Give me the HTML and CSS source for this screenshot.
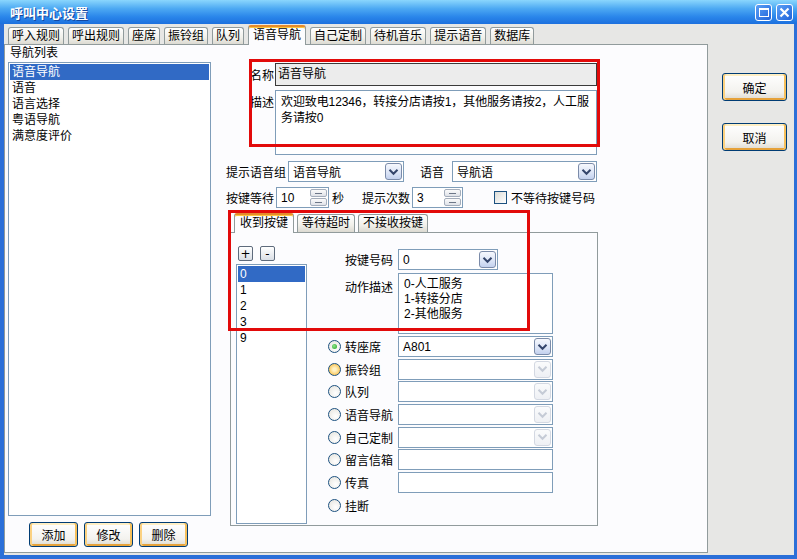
FILE: index.html
```html
<!DOCTYPE html>
<html lang="zh-CN">
<head>
    <meta charset="UTF-8">
    <title>呼叫中心设置</title>
    <link rel="stylesheet" href="styles.css">
</head>
<body>
<div class="window">
    <div class="titlebar">
        <span class="title">呼叫中心设置</span>
        <div class="title-btns">
            <span class="tbtn"><span class="max-box"></span></span>
            <span class="tbtn">
                <svg width="11" height="11" viewBox="0 0 11 11"><path d="M1.5 1.5 L9.5 9.5 M9.5 1.5 L1.5 9.5" stroke="#fff" stroke-width="2.2"/></svg>
            </span>
        </div>
    </div>

    <div class="client">
        <div class="main">
            <div class="tabs">
                <span class="tab">呼入规则</span>
                <span class="tab">呼出规则</span>
                <span class="tab">座席</span>
                <span class="tab">振铃组</span>
                <span class="tab">队列</span>
                <span class="tab active">语音导航</span>
                <span class="tab">自己定制</span>
                <span class="tab">待机音乐</span>
                <span class="tab">提示语音</span>
                <span class="tab">数据库</span>
            </div>

            <div class="panel">
                <div class="nav-col">
                    <div class="nav-label">导航列表</div>
                    <ul class="listbox nav-list">
                        <li class="selected">语音导航</li>
                        <li>语音</li>
                        <li>语言选择</li>
                        <li>粤语导航</li>
                        <li>满意度评价</li>
                    </ul>
                    <div class="nav-btns">
                        <button class="xp-btn">添加</button>
                        <button class="xp-btn">修改</button>
                        <button class="xp-btn">删除</button>
                    </div>
                </div>

                <div class="form-col">
                    <div class="name-row">
                        <span class="lbl-short">名称</span>
                        <div class="name-input">语音导航</div>
                    </div>
                    <div class="desc-row">
                        <span class="lbl-short">描述</span>
                        <div class="desc-box">欢迎致电12346，转接分店请按1，其他服务请按2，人工服<br>务请按0</div>
                    </div>

                    <div class="row row-voice">
                        <span class="lbl lbl-group">提示语音组</span>
                        <div class="combo combo-group">
                            <span class="combo-val">语音导航</span>
                            <span class="arrow"><svg width="11" height="8" viewBox="0 0 11 8"><path d="M1.5 1.8 L5.5 5.8 L9.5 1.8" fill="none" stroke="#34456b" stroke-width="2"/></svg></span>
                        </div>
                        <span class="lbl lbl-voice">语音</span>
                        <div class="combo combo-voice">
                            <span class="combo-val">导航语</span>
                            <span class="arrow"><svg width="11" height="8" viewBox="0 0 11 8"><path d="M1.5 1.8 L5.5 5.8 L9.5 1.8" fill="none" stroke="#34456b" stroke-width="2"/></svg></span>
                        </div>
                    </div>

                    <div class="row row-wait">
                        <span class="lbl lbl-wait">按键等待</span>
                        <div class="spin spin-wait">
                            <span class="spin-val">10</span>
                            <span class="spin-btns"><span class="spin-up"></span><span class="spin-down"></span></span>
                        </div>
                        <span class="lbl lbl-sec">秒</span>
                        <span class="lbl lbl-times">提示次数</span>
                        <div class="spin spin-times">
                            <span class="spin-val">3</span>
                            <span class="spin-btns"><span class="spin-up"></span><span class="spin-down"></span></span>
                        </div>
                        <span class="checkbox"></span>
                        <span class="lbl lbl-check">不等待按键号码</span>
                    </div>

                    <div class="subtabs">
                        <span class="subtab active">收到按键</span>
                        <span class="subtab">等待超时</span>
                        <span class="subtab">不接收按键</span>
                    </div>
                    <div class="subpanel">
                        <div class="key-col">
                            <div class="pm-row">
                                <button class="pm-btn">+</button>
                                <button class="pm-btn">-</button>
                            </div>
                            <ul class="listbox key-list">
                                <li class="selected">0</li>
                                <li>1</li>
                                <li>2</li>
                                <li>3</li>
                                <li>9</li>
                            </ul>
                        </div>

                        <div class="action-col">
                            <div class="key-row">
                                <span class="lbl lbl-key">按键号码</span>
                                <div class="combo combo-key">
                                    <span class="combo-val">0</span>
                                    <span class="arrow"><svg width="11" height="8" viewBox="0 0 11 8"><path d="M1.5 1.8 L5.5 5.8 L9.5 1.8" fill="none" stroke="#34456b" stroke-width="2"/></svg></span>
                                </div>
                            </div>
                            <div class="action-row">
                                <span class="lbl lbl-key">动作描述</span>
                                <div class="action-box">0-人工服务<br>1-转接分店<br>2-其他服务</div>
                            </div>

                            <div class="radio-list">
                                <div class="radio-row">
                                    <span class="radio-item"><span class="radio checked"></span>转座席</span>
                                    <div class="combo combo-target">
                                        <span class="combo-val">A801</span>
                                        <span class="arrow"><svg width="11" height="8" viewBox="0 0 11 8"><path d="M1.5 1.8 L5.5 5.8 L9.5 1.8" fill="none" stroke="#34456b" stroke-width="2"/></svg></span>
                                    </div>
                                </div>
                                <div class="radio-row">
                                    <span class="radio-item"><span class="radio hover"></span>振铃组</span>
                                    <div class="combo combo-target disabled">
                                        <span class="combo-val"></span>
                                        <span class="arrow"><svg width="11" height="8" viewBox="0 0 11 8"><path d="M1.5 1.8 L5.5 5.8 L9.5 1.8" fill="none" stroke="#c5cbd6" stroke-width="2"/></svg></span>
                                    </div>
                                </div>
                                <div class="radio-row">
                                    <span class="radio-item"><span class="radio"></span>队列</span>
                                    <div class="combo combo-target disabled">
                                        <span class="combo-val"></span>
                                        <span class="arrow"><svg width="11" height="8" viewBox="0 0 11 8"><path d="M1.5 1.8 L5.5 5.8 L9.5 1.8" fill="none" stroke="#c5cbd6" stroke-width="2"/></svg></span>
                                    </div>
                                </div>
                                <div class="radio-row">
                                    <span class="radio-item"><span class="radio"></span>语音导航</span>
                                    <div class="combo combo-target disabled">
                                        <span class="combo-val"></span>
                                        <span class="arrow"><svg width="11" height="8" viewBox="0 0 11 8"><path d="M1.5 1.8 L5.5 5.8 L9.5 1.8" fill="none" stroke="#c5cbd6" stroke-width="2"/></svg></span>
                                    </div>
                                </div>
                                <div class="radio-row">
                                    <span class="radio-item"><span class="radio"></span>自己定制</span>
                                    <div class="combo combo-target disabled">
                                        <span class="combo-val"></span>
                                        <span class="arrow"><svg width="11" height="8" viewBox="0 0 11 8"><path d="M1.5 1.8 L5.5 5.8 L9.5 1.8" fill="none" stroke="#c5cbd6" stroke-width="2"/></svg></span>
                                    </div>
                                </div>
                                <div class="radio-row">
                                    <span class="radio-item"><span class="radio"></span>留言信箱</span>
                                    <div class="text-input"></div>
                                </div>
                                <div class="radio-row">
                                    <span class="radio-item"><span class="radio"></span>传真</span>
                                    <div class="text-input"></div>
                                </div>
                                <div class="radio-row">
                                    <span class="radio-item"><span class="radio"></span>挂断</span>
                                </div>
                            </div>
                        </div>
                    </div>
                </div>
            </div>
        </div>

        <div class="side">
            <button class="xp-btn side-btn">确定</button>
            <button class="xp-btn side-btn">取消</button>
        </div>
    </div>

    <!-- 标注框 -->
    <div class="mark mark-top"></div>
    <div class="mark mark-keys"></div>
</div>
</body>
</html>
```

FILE: styles.css
```css
* {
    margin: 0;
    padding: 0;
    box-sizing: border-box;
}

body {
    font-family: "Liberation Sans", "Noto Sans CJK SC", sans-serif;
    font-size: 12px;
    color: #000;
    background-color: #2b6fd8;
}

.window {
    width: 797px;
    height: 559px;
    position: relative;
    display: flex;
    flex-direction: column;
    background-color: #2b6fd8;
    overflow: hidden;
}

/* 标题栏 */
.titlebar {
    height: 24px;
    flex: none;
    display: flex;
    align-items: center;
    justify-content: space-between;
    padding: 0 4px 0 10px;
    background: linear-gradient(#8ad6fd, #4eaaf3 35%, #2a86ea 70%, #1c70de);
}

.title {
    color: #fff;
    font-weight: bold;
    font-size: 13px;
    text-shadow: 1px 1px 0 #1447a0;
}

.title-btns {
    display: flex;
    gap: 4px;
}

.tbtn {
    width: 17px;
    height: 17px;
    border: 1px solid #fff;
    border-radius: 3px;
    background: linear-gradient(135deg, #5aa0f6, #2163d9);
    display: flex;
    align-items: center;
    justify-content: center;
}

.max-box {
    width: 10px;
    height: 9px;
    border: 1px solid #fff;
    border-top-width: 2px;
}

/* 窗口主体 */
.client {
    flex: 1;
    margin: 0 3px 4px 4px;
    background-color: #e7e7e5;
    display: flex;
}

.main {
    width: 704px;
    display: flex;
    flex-direction: column;
    padding-top: 3px;
    padding-bottom: 2px;
}

.tabs {
    display: flex;
    align-items: flex-end;
    height: 17px;
    padding-left: 4px;
    gap: 4px;
    position: relative;
    z-index: 1;
}

.tab, .subtab {
    height: 17px;
    padding: 0 3px;
    line-height: 16px;
    white-space: nowrap;
    border: 1px solid #919b9c;
    border-bottom: none;
    border-radius: 3px 3px 0 0;
    background: linear-gradient(#ffffff, #f1f0ea 60%, #dcdad2);
}

.tab.active, .subtab.active {
    height: 20px;
    margin-bottom: -1px;
    padding: 0 4px;
    line-height: 17px;
    background: #fcfcfe;
    border-top: 2px solid #e68b2c;
    box-shadow: inset 0 1px 0 #ffc83c;
}

.panel {
    flex: 1;
    border: 1px solid #919b9c;
    background-color: #fcfcfe;
    display: flex;
}

/* 导航列表 */
.nav-col {
    width: 207px;
    padding-left: 3px;
}

.nav-label {
    height: 17px;
    line-height: 17px;
    padding-left: 2px;
}

.listbox {
    list-style: none;
    background-color: #fff;
    border: 1px solid #7f9db9;
    padding: 1px;
}

.listbox li {
    height: 16px;
    line-height: 16px;
    padding-left: 2px;
}

.listbox li.selected {
    background-color: #316ac5;
    color: #fff;
}

.nav-list {
    width: 203px;
    height: 454px;
}

.nav-btns {
    display: flex;
    gap: 6px;
    margin-top: 6px;
    padding-left: 21px;
}

.xp-btn {
    width: 49px;
    height: 25px;
    font-family: inherit;
    font-size: 12px;
    color: #000;
    border: 1px solid #003c74;
    border-radius: 3px;
    background: linear-gradient(#ffffff, #f3f2ee 70%, #dcd8cc);
    box-shadow: inset 2px 0 0 #fbd180, inset -2px 0 0 #f6c05c, inset 0 -2px 0 #e6a23a, inset 0 2px 0 #ffefc4;
}

/* 右侧表单 */
.form-col {
    width: 372px;
    margin-left: 14px;
}

.name-row {
    display: flex;
    margin-top: 18px;
    padding-left: 24px;
}

.lbl-short {
    width: 25px;
    padding-top: 3px;
}

.name-input {
    width: 322px;
    height: 23px;
    line-height: 21px;
    padding-left: 2px;
    border: 1px solid #3a3a3a;
    background-color: #ececec;
}

.desc-row {
    display: flex;
    margin-top: 4px;
    padding-left: 24px;
}

.desc-box {
    width: 322px;
    height: 65px;
    padding: 3px 4px 3px 5px;
    line-height: 16px;
    white-space: nowrap;
    overflow: hidden;
    letter-spacing: -0.1px;
    border: 1px solid #7f9db9;
    background-color: #fff;
}

.row {
    display: flex;
    align-items: center;
    height: 21px;
}

.row-voice {
    margin-top: 6px;
}

.row-wait {
    margin-top: 5px;
}

.lbl {
    white-space: nowrap;
}

.lbl-group { width: 62px; }
.lbl-voice { width: 32px; margin-left: 16px; }
.lbl-wait { width: 50px; }
.lbl-sec { width: 12px; margin-left: 3px; }
.lbl-times { width: 50px; margin-left: 18px; }
.lbl-check { margin-left: 4px; }

/* 下拉框 */
.combo {
    height: 21px;
    display: flex;
    align-items: center;
    border: 1px solid #7f9db9;
    background-color: #fff;
    padding: 1px;
}

.combo-val {
    flex: 1;
    padding-left: 3px;
    white-space: nowrap;
}

.arrow {
    width: 17px;
    height: 17px;
    display: flex;
    align-items: center;
    justify-content: center;
    border: 1px solid #7b8ba9;
    border-radius: 3px;
    background: linear-gradient(#f6f8fd, #dbe4f6 60%, #c3d1ee);
}

.combo.disabled .arrow {
    border-color: #d3d8e2;
    background: linear-gradient(#fafbfc, #eef0f4);
}

.combo-group { width: 116px; }
.combo-voice { width: 145px; }
.combo-key { width: 100px; }
.combo-target { width: 155px; }

/* 数字框 */
.spin {
    height: 21px;
    display: flex;
    align-items: center;
    border: 1px solid #7f9db9;
    background-color: #fff;
    padding: 1px;
}

.spin-wait { width: 53px; }
.spin-times { width: 51px; }

.spin-val {
    flex: 1;
    padding-left: 3px;
}

.spin-btns {
    width: 17px;
    height: 17px;
    display: flex;
    flex-direction: column;
    gap: 1px;
}

.spin-up, .spin-down {
    flex: 1;
    border: 1px solid #a4adbb;
    border-radius: 2px;
    background: linear-gradient(#fbfbfb, #dfe2e8);
    position: relative;
}

.spin-up::after, .spin-down::after {
    content: "";
    position: absolute;
    left: 4px;
    right: 4px;
    top: 3px;
    height: 1px;
    background-color: #6d7788;
}

.checkbox {
    width: 13px;
    height: 13px;
    margin-left: 31px;
    border: 1px solid #1c5180;
    background: linear-gradient(135deg, #dcdcd7, #ffffff);
}

/* 子页签 */
.subtabs {
    display: flex;
    align-items: flex-end;
    gap: 3px;
    height: 18px;
    margin-top: 6px;
    padding-left: 8px;
    position: relative;
    z-index: 1;
}

.subtab {
    height: 18px;
    padding: 0 4px;
}

.subtab.active {
    height: 20px;
    padding: 0 5px;
}

.subpanel {
    width: 368px;
    height: 294px;
    margin-left: 4px;
    border: 1px solid #919b9c;
    background-color: #fcfcfe;
    display: flex;
}

.key-col {
    margin-left: 5px;
    padding-top: 13px;
}

.pm-row {
    display: flex;
    gap: 7px;
    padding-left: 2px;
}

.pm-btn {
    width: 15px;
    height: 15px;
    font-family: "DejaVu Sans", sans-serif;
    font-size: 12px;
    line-height: 12px;
    border: 1px solid #5e6b7c;
    border-radius: 2px;
    background: linear-gradient(#ffffff, #dadfe6);
}

.key-list {
    width: 71px;
    height: 260px;
    margin-top: 3px;
}

.action-col {
    margin-left: 21px;
    padding-top: 16px;
}

.key-row, .action-row {
    display: flex;
    padding-left: 17px;
}

.key-row {
    align-items: center;
}

.lbl-key {
    width: 53px;
}

.action-row {
    margin-top: 3px;
}

.action-row .lbl-key {
    padding-top: 5px;
}

.action-box {
    width: 155px;
    height: 61px;
    padding: 3px 5px;
    line-height: 15px;
    border: 1px solid #7f9db9;
    background-color: #fff;
}

.radio-list {
    margin-top: 2px;
    display: flex;
    flex-direction: column;
    gap: 1.7px;
}

.radio-row {
    display: flex;
    align-items: center;
    height: 21px;
}

.radio-item {
    width: 70px;
    display: flex;
    align-items: center;
    white-space: nowrap;
}

.radio {
    width: 13px;
    height: 13px;
    margin-right: 4px;
    border: 1px solid #1c5180;
    border-radius: 50%;
    background: radial-gradient(circle at 60% 65%, #ffffff, #e4e2db);
    display: flex;
    align-items: center;
    justify-content: center;
}

.radio.checked::after {
    content: "";
    width: 5px;
    height: 5px;
    border-radius: 50%;
    background: radial-gradient(circle at 40% 40%, #8ee68a, #21a121);
}

.radio.hover {
    background: radial-gradient(circle, #fff2c4 20%, #f9c24f 80%);
}

.text-input {
    width: 155px;
    height: 21px;
    border: 1px solid #7f9db9;
    background-color: #fff;
}

/* 右侧按钮 */
.side {
    flex: 1;
    display: flex;
    flex-direction: column;
    align-items: flex-start;
    gap: 22px;
    padding: 49px 0 0 14px;
}

.side-btn {
    width: 65px;
    height: 28px;
}

/* 红色标注框 */
.mark {
    position: absolute;
    border: 3px solid #e20a0a;
    z-index: 5;
}

.mark-top {
    left: 249px;
    top: 59px;
    width: 351px;
    height: 88px;
}

.mark-keys {
    left: 228px;
    top: 210px;
    width: 302px;
    height: 121px;
}
```
